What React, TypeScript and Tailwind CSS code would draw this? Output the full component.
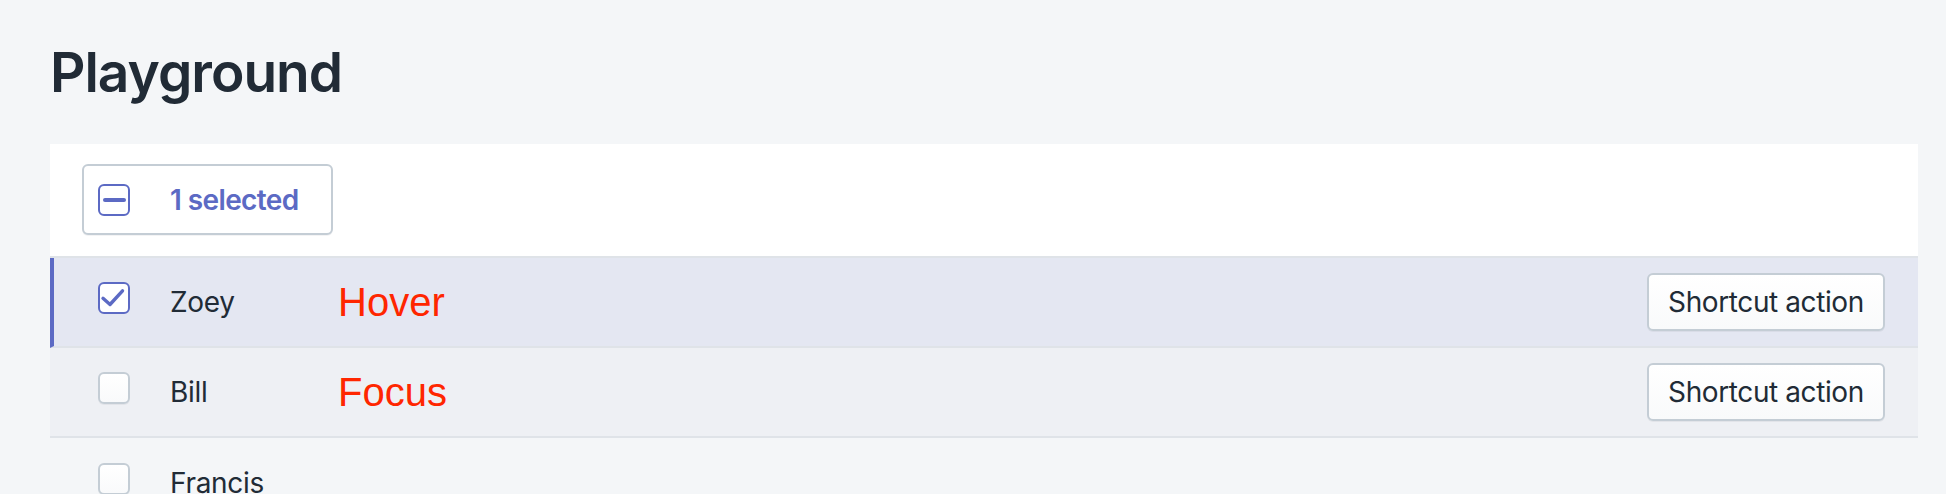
import React from "react";

const rows = [
  { name: "Zoey", note: "Hover", checked: true, action: true },
  { name: "Bill", note: "Focus", checked: false, action: true },
  { name: "Francis", note: "", checked: false, action: false },
];

function Checkbox({ checked }: { checked: boolean }) {
  if (checked) {
    return (
      <div className="w-8 h-8 shrink-0 rounded-[6px] border-2 border-[#5c6ac4] bg-white mb-2">
        <svg viewBox="0 0 28 28" className="w-7 h-7">
          <polyline
            points="3,14.3 10,20.5 22.5,6.8"
            fill="none"
            stroke="#5c6ac4"
            strokeWidth="3.4"
            strokeLinecap="round"
            strokeLinejoin="round"
          />
        </svg>
      </div>
    );
  }
  return (
    <div className="w-8 h-8 shrink-0 rounded-[6px] border-2 border-[#c4cdd5] bg-gradient-to-b from-white to-[#f9fafb] shadow-[0_1px_0_rgba(22,29,37,0.05)] mb-2" />
  );
}

export default function App() {
  return (
    <main className="min-h-screen bg-[#f4f6f8] pl-[50px] pr-[28px] pt-[45px] font-['Inter',sans-serif] text-[#212b36]">
      <h1 className="text-[55px] leading-none font-semibold tracking-[-1px] mb-[44px]">
        Playground
      </h1>

      <div>
        <div className="bg-white pt-5 pb-[21px] px-8 border-b-2 border-[#dfe3e8]">
          <button className="h-[71px] w-[251px] flex items-center pl-[14px] gap-10 border-2 border-[#c4cdd5] rounded-[6px] bg-white shadow-[0_1px_0_rgba(22,29,37,0.05)]">
            <div className="w-8 h-8 shrink-0 rounded-[6px] border-2 border-[#5c6ac4] bg-white flex items-center justify-center">
              <div className="w-[23px] h-1 rounded-full bg-[#5c6ac4]" />
            </div>
            <span className="text-[28px] font-semibold tracking-[-0.6px] text-[#5c6ac4]">1 selected</span>
          </button>
        </div>

        {rows.map((row) => (
          <div
            key={row.name}
            className={
              row.checked
                ? "h-[90px] flex items-center border-b-2 border-[#dfe3e8] bg-[#e4e7f2] border-l-4 border-l-[#5c6ac4] pl-[44px] pr-[33px]"
                : row.action
                ? "h-[90px] flex items-center border-b-2 border-[#dfe3e8] bg-[#eef0f4] pl-12 pr-[33px]"
                : "h-[90px] flex items-center pl-12 pr-[33px]"
            }
          >
            <Checkbox checked={row.checked} />
            <div className="w-[168px] ml-10 text-[28px] tracking-[-0.3px] shrink-0">{row.name}</div>
            <div className="font-['Liberation_Sans',Arial,sans-serif] text-[40px] text-[#ff2600] leading-none">
              {row.note}
            </div>
            {row.action && (
              <button className="ml-auto h-[58px] w-[238px] rounded-[6px] border-2 border-[#c4cdd5] bg-gradient-to-b from-white to-[#f9fafb] shadow-[0_1px_0_rgba(22,29,37,0.05)] text-[28px] tracking-[-0.4px] text-[#212b36]">
                Shortcut action
              </button>
            )}
          </div>
        ))}
      </div>
    </main>
  );
}
